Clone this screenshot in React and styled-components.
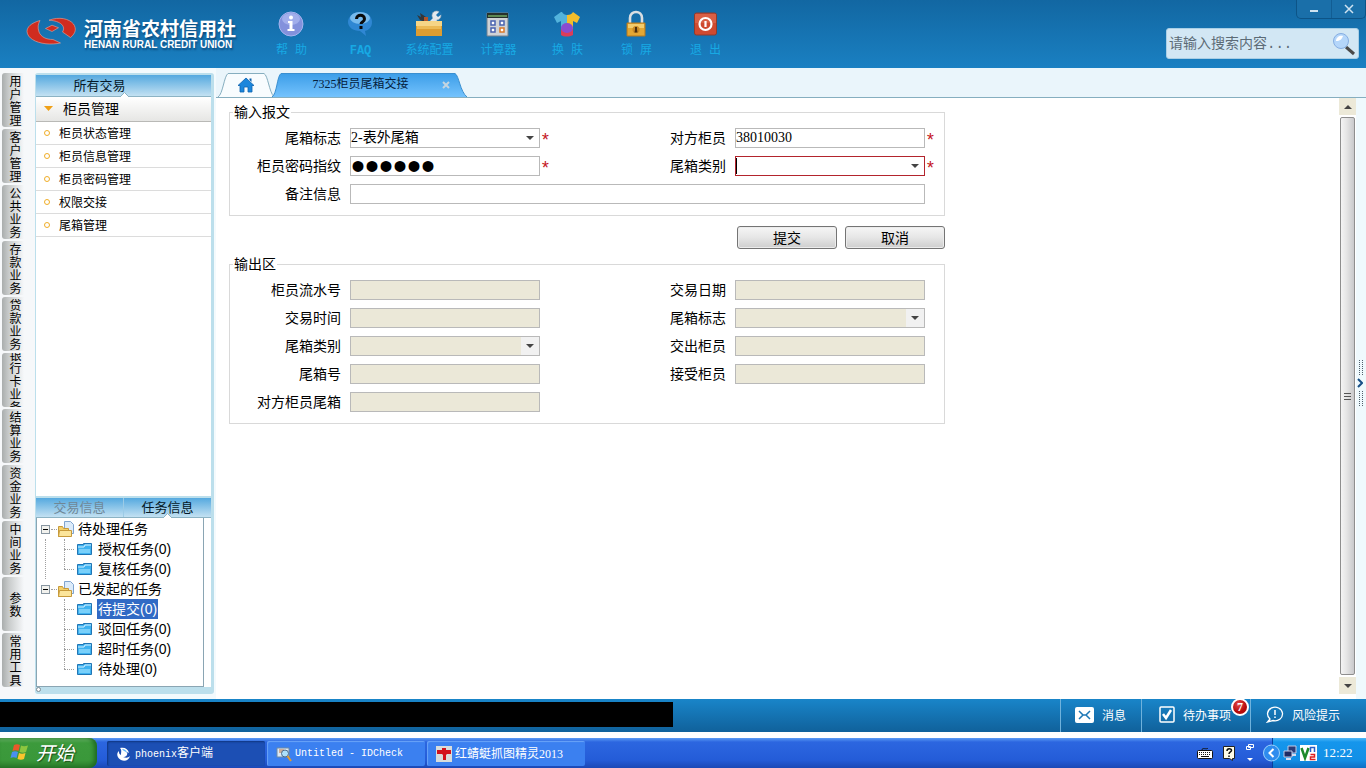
import React from "react";
import styled, { createGlobalStyle, css } from "styled-components";

const CJK = '"Noto Sans CJK SC", sans-serif';

const Global = createGlobalStyle`
  *, *::before, *::after { box-sizing: border-box; }
  body { margin: 0; background: #fff; color: #000; font: 14px/16px "Liberation Sans", ${CJK}; }
  button, input, select { font: inherit; color: inherit; margin: 0; }
  button { cursor: pointer; }
  svg { display: block; flex: none; }
  ul { list-style: none; margin: 0; padding: 0; }
`;

const Page = styled.div`
  display: flex;
  flex-direction: column;
  min-height: 100vh;
`;

/* ---------- header ---------- */
const Header = styled.header`
  display: flex;
  height: 68px;
  background: linear-gradient(#1267a2, #1a80c2);
`;
const Brand = styled.div`
  display: flex;
  align-items: flex-start;
  gap: 7px;
  width: 257px;
  padding: 17px 0 0 26px;
  color: #fff;
  text-shadow: 1px 2px 2px #0b4a7c;
`;
const BrandName = styled.div`
  font: bold 19px/22px ${CJK};
  white-space: nowrap;
`;
const BrandSub = styled.div`
  font: bold 10px/12px "Liberation Sans", sans-serif;
  white-space: nowrap;
`;
const Tools = styled.nav`
  display: flex;
  flex: 1;
`;
const ToolButton = styled.button`
  display: flex;
  flex-direction: column;
  align-items: center;
  gap: 6px;
  width: 69px;
  padding: 10px 0 0;
  border: 0;
  background: none;
  color: #17a9e4;
  font: ${(p) => (p.$bold ? "bold " : "")}12px/16px "Liberation Mono", ${CJK};
  white-space: nowrap;
`;
const HeaderEnd = styled.div`
  display: flex;
  flex-direction: column;
  align-items: flex-end;
  gap: 9px;
`;
const WindowButtons = styled.div`
  display: flex;
  height: 19px;
  border: 1px solid #0d5487;
  border-top: 0;
  border-radius: 0 0 5px 5px;
  background: #1a6fa9;
`;
const WindowButton = styled.button`
  display: flex;
  align-items: center;
  justify-content: center;
  width: 34px;
  padding: 0;
  border: 0;
  background: none;
  & + & { border-left: 1px solid #125d93; }
`;
const Search = styled.form`
  display: flex;
  align-items: center;
  width: 193px;
  height: 31px;
  margin-right: 7px;
  padding: 0 2px;
  border: 1px solid #a9cfe6;
  border-radius: 3px;
  background: #d2e7f4;
`;
const SearchInput = styled.input`
  flex: 1;
  min-width: 0;
  padding: 0;
  border: 0;
  outline: 0;
  background: none;
  font: 14px/20px "Liberation Mono", ${CJK};
  &::placeholder { color: #5c6b76; opacity: 1; }
`;
const IconButton = styled.button`
  padding: 0;
  border: 0;
  background: none;
`;

/* ---------- body ---------- */
const Body = styled.div`
  display: flex;
  flex: 1;
  background: #f3fafd;
`;
const Rail = styled.nav`
  display: flex;
  flex-direction: column;
  gap: 2px;
  width: 35px;
  padding: 5px 2px 0;
  background: #f6f8fa;
`;
const RailTab = styled.button`
  display: flex;
  align-items: center;
  height: 54px;
  padding: 0 0 0 7px;
  overflow: hidden;
  border: 0;
  border-radius: 3px 0 0 3px;
  background: linear-gradient(90deg, #a9adad, #c9cccc 7px, #f6f8fa 22px);
`;
const RailText = styled.span`
  width: 13px;
  font: 12px/13px ${CJK};
  word-break: break-all;
`;
const Side = styled.aside`
  position: relative;
  display: flex;
  flex-direction: column;
  width: 179px;
  margin: 5px 0 5px;
  border: 2px solid #bcdfec;
  border-width: 2px 3px 7px 1px;
  border-radius: 3px;
  background: #fff;
  &::after {
    content: "";
    position: absolute;
    left: 0;
    bottom: -5px;
    width: 5px;
    height: 5px;
    border: 1px solid #7d8b93;
    border-radius: 50%;
    background: #fff;
  }
`;
const SideHead = styled.div`
  display: flex;
  height: 22px;
  border-top: ${(p) => (p.$lower ? "2px solid #bcdfec" : "0")};
  border-bottom: 1px solid #8cb3c4;
  background: linear-gradient(#55a9df, #c3e1f2);
`;
const SideTab = styled.button`
  position: relative;
  flex: ${(p) => (p.$wide ? "none" : "1")};
  width: ${(p) => (p.$wide ? "127px" : "auto")};
  padding: 0 0 2px;
  border: 0;
  background: none;
  color: ${(p) => (p.$dim ? "#6f8797" : "#041827")};
  font: 13px/18px ${CJK};
  & + & { border-left: 1px solid #9ccbe6; }
`;
const Notch = styled.svg`
  position: absolute;
  bottom: -1px;
  left: calc(50% + ${(p) => p.$shift}px);
`;
const MenuTitle = styled.button`
  display: flex;
  align-items: center;
  gap: 10px;
  height: 25px;
  padding: 0 8px 2px;
  border: 0;
  border-bottom: 1px solid #b9b9b6;
  background: linear-gradient(#fff, #e6e6e4);
  font: 14px/20px ${CJK};
`;
const Menu = styled.ul`
  flex: 1;
`;
const MenuItem = styled.a`
  display: flex;
  align-items: center;
  gap: 9px;
  height: 23px;
  padding-left: 8px;
  border-bottom: 1px solid #dcdcdc;
  color: #000;
  font: 12px/16px ${CJK};
  text-decoration: none;
  &::before {
    content: "";
    width: 6px;
    height: 6px;
    border: 1px solid #f0ae28;
    border-radius: 50%;
  }
`;
const Tree = styled.ul`
  width: 168px;
  height: 169px;
  padding-top: 1px;
  border: 1px solid #8aa5b3;
  border-top: 0;
`;
const TreeRow = styled.div`
  position: relative;
  display: flex;
  align-items: center;
  gap: 3px;
  height: 20px;
  padding-left: 4px;
  &::before {
    content: "";
    position: absolute;
    left: 14px;
    top: 10px;
    width: 6px;
    border-top: 1px dotted #a0a0a0;
  }
`;
const Toggle = styled.button`
  display: flex;
  align-items: center;
  justify-content: center;
  width: 9px;
  height: 9px;
  margin-right: 5px;
  padding: 0;
  border: 1px solid #8795a0;
  background: #f2f2ee;
  &::before { content: ""; width: 5px; height: 1px; background: #000; }
`;
const Branch = styled.ul`
  margin-left: 8px;
  padding-left: 18px;
  border-left: 1px dotted ${(p) => (p.$last ? "transparent" : "#a0a0a0")};
`;
const Leaf = styled.li`
  position: relative;
  display: flex;
  align-items: center;
  gap: 5px;
  height: 20px;
  padding-left: 13px;
  &::before, &::after { content: ""; position: absolute; left: 0; top: 0; }
  &::before { height: ${(p) => (p.$last ? "10px" : "20px")}; border-left: 1px dotted #a0a0a0; }
  &::after { top: 10px; width: 10px; border-top: 1px dotted #a0a0a0; }
`;
const LeafLabel = styled.span`
  padding: 1px;
  color: ${(p) => (p.$on ? "#fff" : "#000")};
  background: ${(p) => (p.$on ? "#316ac5" : "none")};
  line-height: 18px;
  white-space: nowrap;
`;

/* ---------- main ---------- */
const Main = styled.main`
  display: flex;
  flex-direction: column;
  flex: 1;
  min-width: 0;
  margin-left: 2px;
`;
const Tabs = styled.div`
  display: flex;
  align-items: flex-end;
  height: 30px;
  padding-left: 2px;
  border-bottom: 1px solid #86aebf;
  background: #eaf5fb;
`;
const Tab = styled.button`
  position: relative;
  display: flex;
  align-items: center;
  justify-content: center;
  width: ${(p) => (p.$home ? "56px" : "195px")};
  height: 24px;
  margin-left: ${(p) => (p.$home ? "0" : "-2px")};
  padding: 0;
  border: 0;
  background: none;
  color: #04203c;
  font: 12px/16px "Liberation Serif", ${CJK};
`;
const TabShape = styled.svg`
  position: absolute;
  left: 0;
  top: 0;
`;
const TabText = styled.span`
  position: relative;
  margin-right: 18px;
  padding-bottom: 2px;
`;
const TabIcon = styled.span`
  position: relative;
`;
const TabClose = styled.span`
  position: absolute;
  right: 17px;
  top: 8px;
`;
const Work = styled.div`
  display: flex;
  flex: 1;
`;
const Content = styled.div`
  flex: 1;
  min-width: 0;
  padding: 6px 13px;
  background: #fff;
`;
const Form = styled.form`
  max-width: 716px;
`;
const Group = styled.fieldset`
  min-width: 0;
  margin: 0;
  padding: 8px 0 11px;
  border: 1px solid #d9d9d9;
`;
const Legend = styled.legend`
  margin-left: 3px;
  padding: 0 1px 2px;
  font: 14px/14px ${CJK};
`;
const Fields = styled.div`
  display: grid;
  grid-template-columns: 112px 190px 1fr 190px 11px;
  gap: 8px;
`;
const Label = styled.label`
  padding-right: 1px;
  font: 14px/18px ${CJK};
  text-align: right;
`;
const Cell = styled.div`
  position: relative;
  display: flex;
  height: 20px;
  grid-column: span ${(p) => p.$span || 1};
`;
const box = css`
  flex: none;
  width: 100%;
  height: 20px;
  padding: 0;
  border: 1px solid ${(p) => (p.$alert ? "#b3242d" : "#b9b9b9")};
  border-radius: 0;
  outline: 0;
  background: #fff;
  font: 14px/18px "Liberation Serif", ${CJK};
  &:disabled { background: #ebe8d8; opacity: 1; }
`;
const TextBox = styled.input`${box}`;
const SecretBox = styled.input`
  ${box}
  font: 40px/18px "Liberation Sans", sans-serif;
`;
const Choice = styled.select`
  ${box}
  appearance: none;
`;
const ChoiceArrow = styled.span`
  position: absolute;
  right: 1px;
  top: 1px;
  display: flex;
  align-items: center;
  justify-content: center;
  width: 18px;
  height: 18px;
  background: ${(p) => (p.$off ? "#f1f1f1" : "none")};
  pointer-events: none;
`;
const Caret = styled.span`
  position: absolute;
  left: 1px;
  top: 2px;
  width: 1px;
  height: 16px;
  background: #000;
`;
const Star = styled.span`
  padding-top: 3px;
  color: #c4161c;
  font: 18px/20px "Liberation Mono", monospace;
`;
const Actions = styled.div`
  display: flex;
  justify-content: flex-end;
  gap: 8px;
  margin: 10px 0 7px;
`;
const ActionButton = styled.button`
  width: 100px;
  height: 23px;
  padding: 0 0 2px;
  border: 1px solid #747474;
  border-radius: 3px;
  background: linear-gradient(#f6f6f6, #e6e6e6 50%, #cecece);
  box-shadow: inset 0 0 0 1px #ececec;
  font: 14px/18px ${CJK};
`;
const ScrollTrack = styled.div`
  display: flex;
  flex-direction: column;
  align-items: center;
  gap: 2px;
  width: 17px;
  padding-bottom: 5px;
  background: #fff;
`;
const ScrollEnd = styled.button`
  display: flex;
  align-items: center;
  justify-content: center;
  width: 17px;
  height: 17px;
  padding: 0;
  border: 0;
  background: #ece9d8;
`;
const ScrollThumb = styled.div`
  display: flex;
  align-items: center;
  justify-content: center;
  flex: 1;
  width: 15px;
  border: 1px solid #8e8e8e;
  border-radius: 2px;
  background: linear-gradient(90deg, #f4f4f4, #e4e4e4 45%, #c9c9cb);
`;
const Splitter = styled.div`
  display: flex;
  flex-direction: column;
  align-items: flex-end;
  justify-content: center;
  gap: 3px;
  width: 10px;
  padding-right: 3px;
  padding-bottom: 32px;
  background: #eff9fd;
`;
const Dots = styled.span`
  width: 4px;
  height: 15px;
  border: 0 dotted #50606c;
  border-width: 0 1px;
`;

/* ---------- status bar ---------- */
const Status = styled.footer`
  display: flex;
  height: 33px;
  margin-bottom: 6px;
  background: linear-gradient(#1985c9, #10619b);
`;
const StatusFill = styled.div`
  flex: 1;
  padding-top: 3px;
`;
const Redacted = styled.div`
  width: 63.5%;
  height: 25px;
  background: #000;
`;
const StatusItem = styled.button`
  position: relative;
  display: flex;
  align-items: center;
  gap: 8px;
  width: ${(p) => p.$w}px;
  padding: 0 0 2px 14px;
  border: 0;
  border-left: 1px solid #6fb2dc;
  background: none;
  color: #fff;
  font: 12px/16px ${CJK};
  white-space: nowrap;
`;
const Badge = styled.span`
  position: absolute;
  right: 1px;
  top: -1px;
  width: 18px;
  height: 18px;
  border: 2px solid #fff;
  border-radius: 50%;
  background: radial-gradient(circle at 40% 30%, #e24a4a, #b50a0a 60%);
  font: bold 12px/14px "Liberation Serif", serif;
  text-align: center;
`;

/* ---------- taskbar ---------- */
const Taskbar = styled.footer`
  display: flex;
  height: 30px;
  background: linear-gradient(#5b9bf5, #2c66e0 4px, #245cd8 22px, #1b48b5);
  color: #fff;
`;
const Start = styled.button`
  display: flex;
  align-items: center;
  gap: 6px;
  width: 97px;
  margin-right: 10px;
  padding: 0 0 2px 10px;
  border: 0;
  border-radius: 0 8px 8px 0;
  background: linear-gradient(#6cb86a, #3c9a3c 5px, #3a983a 22px, #2a7a2a);
  box-shadow: inset -3px 0 4px #1f6b22;
  color: #fff;
  font: italic 19px/24px ${CJK};
  text-shadow: 1px 1px 1px #1a4d1a;
`;
const Tasks = styled.div`
  display: flex;
  flex: 1;
  gap: 2px;
  padding: 3px 0 2px;
`;
const Task = styled.button`
  display: flex;
  align-items: center;
  gap: 3px;
  width: 158px;
  padding: 0 0 0 9px;
  border: 0;
  border-radius: 2px;
  background: ${(p) => (p.$on ? "#1c4fb4" : "#3b80f0")};
  box-shadow: ${(p) => (p.$on ? "inset 1px 1px 2px #0f3680" : "inset 1px 1px 1px #6ba3f8")};
  color: #fff;
  font: 12px/16px ${CJK};
  white-space: nowrap;
`;
const Latin = styled.span`
  font: 10px/16px "Liberation Mono", monospace;
`;
const Digits = styled.span`
  font: 12px/16px "Liberation Serif", serif;
`;
const InputTools = styled.div`
  display: flex;
  align-items: center;
  gap: 10px;
  padding-right: 17px;
`;
const Tray = styled.div`
  display: flex;
  align-items: center;
  gap: 3px;
  width: 94px;
  border-left: 1px solid #0a3f9c;
  background: linear-gradient(#4fb8f8, #1596ec 4px, #128fe6 22px, #0e6fc4);
`;
const TrayToggle = styled.button`
  margin-left: -10px;
  padding: 0;
  border: 0;
  background: none;
`;
const Clock = styled.time`
  margin-left: 3px;
  font: 13px/16px "Liberation Serif", serif;
`;

/* ---------- drawings ---------- */
const Logo = () => (
  <svg width="51" height="30" viewBox="0 0 51 30">
    <g fill="#d02c1f" stroke="#e9a79b" strokeWidth=".6">
      <path d="M14 3.500C5 6 1 10 1 14.500 1.500 21 9 25.500 20 26.800c5 .4 10 .2 14.500-.8L27 22.500c-7 0-12-2.500-14-7.500-1.500-4.500-1-8 1-11.500z" />
      <path d="M23 3.200C33-.5 43 1.500 47.500 7c3 4.500 2.500 9-3 13.500L36.500 15C40 9.500 35 4 23 3.200z" />
      <path d="M19.500 11.500L26 8.200l6.500 2.500-6.500 3.800z" />
    </g>
  </svg>
);
const toolIcons = {
  help: (
    <>
      <circle cx="13" cy="14" r="12" fill="#8391dc" stroke="#a5b4ee" />
      <ellipse cx="13" cy="9" rx="9" ry="6" fill="#b2bff2" opacity=".65" />
      <circle cx="13" cy="7.500" r="2" fill="#fff" />
      <path d="M10 11h4.500v8h2v2h-7v-2h2v-6H10z" fill="#fff" />
    </>
  ),
  faq: (
    <>
      <path d="M13 2c7 0 12 4 12 10 0 5-3 8-7 9l1 5-6-5C6 21 1 17 1 12S6 2 13 2z" fill="#2f87d3" />
      <ellipse cx="13" cy="8" rx="10" ry="6" fill="#8fcbf5" opacity=".75" />
      <path d="M9.500 9c0-5 8-5 8 0 0 3-3.500 3-3.500 5M14 16v3" fill="none" stroke="#0b0b0b" strokeWidth="3" />
    </>
  ),
  config: (
    <>
      <path d="M4 10l-3-5 4 2-1-4 6 4-1 5z" fill="#33373b" />
      <circle cx="20.500" cy="5.500" r="4.500" fill="#e4e9ed" stroke="#9aa6ae" strokeWidth=".6" />
      <path d="M20 5l4-4 2 3-4 3z" fill="#1a72b0" />
      <path d="M14 11l4-4 3 3-1 2z" fill="#dfe5ea" />
      <path d="M8 7h4v4H8z" fill="#b2552a" />
      <path d="M0 11h26v15H0z" fill="#dd9d31" />
      <path d="M0 11h26v5H0z" fill="#f6d586" />
      <path d="M1 16h24v3H1z" fill="#ecba55" />
    </>
  ),
  calc: (
    <>
      <path d="M2 3h21v23H2z" fill="#cfd2d6" stroke="#73818e" />
      <path d="M2 3h21v5H2z" fill="#26312d" />
      <path d="M3 5h19v2H3z" fill="#5e8a55" />
      <g fill="#fff" stroke="#4a63b0" strokeWidth="1.500">
        <path d="M6 11h4v4H6zM15 11h4v4h-4zM6 18h4v4H6z" />
        <path d="M15 18h4v4h-4z" stroke="#d97a2b" />
      </g>
    </>
  ),
  skin: (
    <>
      <path d="M7 2L0 7l3 6 4-2v14h6V5C11 5 9 4 8 2z" fill="#53b3dc" />
      <path d="M19 2l7 5-3 6-4-2v9H9l4-7V5c3 0 5-1 6-3z" fill="#f2bd2c" />
      <path d="M7 19h12v6c-4 2-9 2-12 0z" fill="#dc3d58" />
      <ellipse cx="13" cy="18" rx="6" ry="5" fill="#8a4bd0" />
    </>
  ),
  lock: (
    <>
      <path d="M7 14V8c0-8 12-8 12 0v6" fill="none" stroke="#d9dee2" strokeWidth="2.600" />
      <path d="M4 13h18v13H4z" fill="#e3a733" stroke="#b5791c" />
      <path d="M5 14h16v4H5z" fill="#f3cc6b" />
      <circle cx="13" cy="19.500" r="3.500" fill="#c98a25" />
      <path d="M12 17h2v2.500l.5 3h-3l.5-3z" fill="#4a2e0c" />
    </>
  ),
  exit: (
    <>
      <rect x="2.500" y="3" width="22" height="22" rx="2" fill="#cf4a30" stroke="#8f3b2c" />
      <path d="M3 4h21v9H3z" fill="#e27a5f" opacity=".45" />
      <circle cx="13.500" cy="14" r="6" fill="none" stroke="#fff" strokeWidth="2.200" />
      <path d="M13.500 11v6" stroke="#fff" strokeWidth="2.200" />
    </>
  ),
};
const Magnifier = () => (
  <svg width="24" height="24" viewBox="0 0 24 24">
    <path d="M14 15l8 7" stroke="#4a4a4a" strokeWidth="3" />
    <circle cx="9" cy="9" r="7.500" fill="#b4d6fa" stroke="#86aee2" />
    <path d="M4 9c0-4 4-6 7-5-1 3-3 5-7 5z" fill="#fff" />
  </svg>
);
const OpenFolder = () => (
  <svg width="16" height="16" viewBox="0 0 16 16">
    <path d="M6.500 .5h6l3 3v9h-9z" fill="#dcebfa" stroke="#7fa4cf" />
    <path d="M.5 5.500h4l1 2h5v8H.5z" fill="#f3cf6b" stroke="#c79a3a" />
    <path d="M1.500 9.500h12v6h-13z" fill="#fbe59b" stroke="#c79a3a" />
  </svg>
);
const Folder = () => (
  <svg width="15" height="14" viewBox="0 0 15 14">
    <path d="M.5 2.500h6v-1h8v11H.5z" fill="#3fb2f0" stroke="#2176b5" />
    <path d="M1 5h6l1-2h6" fill="none" stroke="#d5f1ff" />
    <path d="M2 7h11v4H2z" fill="#79d0fa" />
  </svg>
);
const Down = ({ color = "#444" }) => (
  <svg width="9" height="5" viewBox="0 0 9 5"><path d="M0 0h9L4.500 5z" fill={color} /></svg>
);
const SmallDown = () => (
  <svg width="8" height="4" viewBox="0 0 8 4"><path d="M0 0h8L4 4z" fill="#444" /></svg>
);
const WindowsFlag = () => (
  <svg width="20" height="20" viewBox="0 0 20 20">
    <path d="M4 3c2-1 4-1 6 0L8.500 9c-2-1-4-1-6 0z" fill="#e8582a" />
    <path d="M11 3.500c2 1 4 1 7 0L16 10c-2 1-4 1-6.500 0z" fill="#8cc63f" />
    <path d="M2 10c2-1 4-1 6 0l-1.500 6c-2-1-4-1-6 0z" fill="#4a8ff0" />
    <path d="M9 11c2 1 4 1 6.500 0L14 17c-2 1-4 1-6.500 0z" fill="#fbc52d" />
  </svg>
);
const NotchMark = ({ shift = 0 }) => (
  <Notch $shift={shift - 5} width="9" height="5" viewBox="0 0 9 5">
    <path d="M0 5L4.500 .5 9 5" fill="#fff" stroke="#8cb3c4" />
  </Notch>
);

/* ---------- data ---------- */
const tools = [
  ["help", "帮 助"], ["faq", "FAQ"], ["config", "系统配置"], ["calc", "计算器"],
  ["skin", "换 肤"], ["lock", "锁 屏"], ["exit", "退 出"],
];
const rail = ["用户管理", "客户管理", "公共业务", "存款业务", "贷款业务", "银行卡业务", "结算业务", "资金业务", "中间业务", "参数", "常用工具"];
const menu = ["柜员状态管理", "柜员信息管理", "柜员密码管理", "权限交接", "尾箱管理"];
const tree = [
  { name: "待处理任务", items: ["授权任务(0)", "复核任务(0)"] },
  { name: "已发起的任务", items: ["待提交(0)", "驳回任务(0)", "超时任务(0)", "待处理(0)"] },
];
const outputs = [
  ["serial", "柜员流水号"], ["date", "交易日期"],
  ["time", "交易时间"], ["outFlag", "尾箱标志", true],
  ["outType", "尾箱类别", true], ["from", "交出柜员"],
  ["boxNo", "尾箱号"], ["to", "接受柜员"],
  ["peerBox", "对方柜员尾箱"],
];

function SelectField({ id, options = [""], disabled, alert, required, caret }) {
  return (
    <Cell>
      <Choice id={id} disabled={disabled} $alert={alert}>
        {options.map((o) => <option key={o}>{o}</option>)}
      </Choice>
      {caret && <Caret />}
      <ChoiceArrow $off={disabled}><SmallDown /></ChoiceArrow>
      {required && <Star>*</Star>}
    </Cell>
  );
}

function Sidebar() {
  return (
    <Side>
      <SideHead><SideTab $wide>所有交易<NotchMark shift={25} /></SideTab></SideHead>
      <MenuTitle><Down color="#f0a016" />柜员管理</MenuTitle>
      <Menu>
        {menu.map((m) => <li key={m}><MenuItem href="#">{m}</MenuItem></li>)}
      </Menu>
      <SideHead $lower>
        <SideTab $dim>交易信息</SideTab>
        <SideTab>任务信息<NotchMark /></SideTab>
      </SideHead>
      <Tree>
        {tree.map((g, gi) => (
          <li key={g.name}>
            <TreeRow><Toggle aria-label="折叠" /><OpenFolder /><LeafLabel>{g.name}</LeafLabel></TreeRow>
            <Branch $last={gi === tree.length - 1}>
              {g.items.map((t, i) => (
                <Leaf key={t} $last={i === g.items.length - 1}>
                  <Folder /><LeafLabel $on={t === "待提交(0)"}>{t}</LeafLabel>
                </Leaf>
              ))}
            </Branch>
          </li>
        ))}
      </Tree>
    </Side>
  );
}

function Workspace() {
  return (
    <Form>
      <Group>
        <Legend>输入报文</Legend>
        <Fields>
          <Label htmlFor="flag">尾箱标志</Label>
          <SelectField id="flag" options={["2-表外尾箱"]} required />
          <Label htmlFor="peer">对方柜员</Label>
          <Cell><TextBox id="peer" defaultValue="38010030" /><Star>*</Star></Cell>
          <span />
          <Label htmlFor="secret">柜员密码指纹</Label>
          <Cell><SecretBox id="secret" type="password" defaultValue="000000" /><Star>*</Star></Cell>
          <Label htmlFor="type">尾箱类别</Label>
          <SelectField id="type" alert caret required />
          <span />
          <Label htmlFor="memo">备注信息</Label>
          <Cell $span={3}><TextBox id="memo" /></Cell>
        </Fields>
      </Group>
      <Actions>
        <ActionButton type="button">提交</ActionButton>
        <ActionButton type="button">取消</ActionButton>
      </Actions>
      <Group>
        <Legend>输出区</Legend>
        <Fields>
          {outputs.map(([id, name, list], i) => (
            <React.Fragment key={id}>
              <Label htmlFor={id}>{name}</Label>
              {list ? <SelectField id={id} disabled /> : <Cell><TextBox id={id} disabled /></Cell>}
              {i % 2 === 1 && <span />}
            </React.Fragment>
          ))}
        </Fields>
      </Group>
    </Form>
  );
}

export default function App() {
  return (
    <Page>
      <Global />
      <Header>
        <Brand>
          <Logo />
          <div>
            <BrandName>河南省农村信用社</BrandName>
            <BrandSub>HENAN RURAL CREDIT UNION</BrandSub>
          </div>
        </Brand>
        <Tools>
          {tools.map(([k, name]) => (
            <ToolButton key={k} $bold={k === "faq"}>
              <svg width="27" height="27" viewBox="0 0 27 27">{toolIcons[k]}</svg>
              {name}
            </ToolButton>
          ))}
        </Tools>
        <HeaderEnd>
          <WindowButtons>
            <WindowButton aria-label="最小化">
              <svg width="10" height="10" viewBox="0 0 10 10"><path d="M1 7h8" stroke="#cfe3f1" strokeWidth="2" /></svg>
            </WindowButton>
            <WindowButton aria-label="关闭">
              <svg width="10" height="10" viewBox="0 0 10 10"><path d="M1 1l8 8M9 1L1 9" stroke="#cfe3f1" strokeWidth="1.500" /></svg>
            </WindowButton>
          </WindowButtons>
          <Search>
            <SearchInput aria-label="搜索" placeholder="请输入搜索内容..." />
            <IconButton type="button" aria-label="查找"><Magnifier /></IconButton>
          </Search>
        </HeaderEnd>
      </Header>

      <Body>
        <Rail>
          {rail.map((r) => <RailTab key={r}><RailText>{r}</RailText></RailTab>)}
        </Rail>
        <Sidebar />
        <Main>
          <Tabs>
            <Tab $home aria-label="首页">
              <TabShape width="56" height="24" viewBox="0 0 56 24">
                <path d="M0 24C5 21 6 3 10 .5h36c4 2 5 18 10 23.500" fill="#f8fcfe" stroke="#86aebf" />
              </TabShape>
              <TabIcon>
                <svg width="18" height="16" viewBox="0 0 18 16">
                  <path d="M9 1l8 7.500h-2V15h-4v-5H7v5H3V8.500H1z" fill="#1b86dc" stroke="#0e62ae" strokeWidth=".8" />
                  <path d="M12.500 1.500h2V5l-2-2z" fill="#0e62ae" />
                </svg>
              </TabIcon>
            </Tab>
            <Tab>
              <TabShape width="195" height="24" viewBox="0 0 195 24">
                <defs>
                  <linearGradient id="tabFill" x2="0" y2="1">
                    <stop offset="0" stopColor="#3c9ee8" /><stop offset="1" stopColor="#74c2fd" />
                  </linearGradient>
                </defs>
                <path d="M0 24C5 21 5 3 9 .5h174c4 2 5 18 12 23.500" fill="url(#tabFill)" stroke="#3a8fd0" />
              </TabShape>
              <TabText>7325柜员尾箱交接</TabText>
              <TabClose>
                <svg width="8" height="8" viewBox="0 0 8 8"><path d="M1 1l6 6M7 1L1 7" stroke="#c5d5e0" strokeWidth="2" /></svg>
              </TabClose>
            </Tab>
          </Tabs>
          <Work>
            <Content><Workspace /></Content>
            <ScrollTrack>
              <ScrollEnd aria-label="向上"><svg width="8" height="4" viewBox="0 0 8 4"><path d="M0 4h8L4 0z" fill="#444" /></svg></ScrollEnd>
              <ScrollThumb><svg width="7" height="9" viewBox="0 0 7 9"><path d="M0 1.500h7M0 4.500h7M0 7.500h7" stroke="#555" /></svg></ScrollThumb>
              <ScrollEnd aria-label="向下"><SmallDown /></ScrollEnd>
            </ScrollTrack>
            <Splitter>
              <Dots />
              <svg width="6" height="10" viewBox="0 0 6 10"><path d="M1 1l4 4-4 4" fill="none" stroke="#174f86" strokeWidth="2" /></svg>
              <Dots />
            </Splitter>
          </Work>
        </Main>
      </Body>

      <Status>
        <StatusFill><Redacted /></StatusFill>
        <StatusItem $w={81}>
          <svg width="19" height="16" viewBox="0 0 19 16">
            <rect width="19" height="16" rx="2" fill="#fff" />
            <path d="M4 4l4 4-4 4M15 4l-4 4 4 4M8 8h3" fill="none" stroke="#1b76b5" strokeWidth="1.500" />
          </svg>
          消息
        </StatusItem>
        <StatusItem $w={109}>
          <svg width="19" height="17" viewBox="0 0 19 17">
            <rect x="4" y="1" width="14" height="15" rx="1" fill="none" stroke="#fff" strokeWidth="1.500" />
            <path d="M7 8l3 4 5-8" fill="none" stroke="#fff" strokeWidth="2.500" />
          </svg>
          待办事项
          <Badge>7</Badge>
        </StatusItem>
        <StatusItem $w={116}>
          <svg width="19" height="17" viewBox="0 0 19 17">
            <path d="M5 13l-2.500 3 5.500-1.500a7.500 6.800 0 1 0-3-1.500z" fill="none" stroke="#fff" strokeWidth="1.300" />
            <path d="M10 4v5M10 10.500v1.500" stroke="#fff" strokeWidth="1.500" />
          </svg>
          风险提示
        </StatusItem>
      </Status>

      <Taskbar>
        <Start><WindowsFlag />开始</Start>
        <Tasks>
          <Task $on>
            <svg width="16" height="16" viewBox="0 0 16 16">
              <path d="M4 2c5-1 8 1 9 5l-2-1c1 3-1 5-4 5 3 1 5 1 7-1-1 4-5 6-9 4-4-2-5-7-2-9 0 2 0 3 2 4 0-3 1-5-1-7z" fill="#fff" />
              <path d="M6 3c3 0 5 2 5 4-2-2-4-2-5-4z" fill="#67b7f5" />
            </svg>
            <span><Latin>phoenix</Latin>客户端</span>
          </Task>
          <Task>
            <svg width="16" height="16" viewBox="0 0 16 16">
              <path d="M1 2h12v9H1z" fill="#dce9f5" stroke="#6e8aa6" />
              <path d="M3 4h5M3 6h3" stroke="#c26e35" />
              <circle cx="9" cy="7.500" r="3.500" fill="#aee0fa" stroke="#4c6c8c" />
              <path d="M11.500 10l3.500 5" stroke="#e39a30" strokeWidth="2" />
            </svg>
            <Latin>Untitled - IDCheck</Latin>
          </Task>
          <Task>
            <svg width="16" height="16" viewBox="0 0 16 16">
              <rect width="16" height="16" fill="#d8dcdc" />
              <path d="M6 2h4v2h5v4h-4l-1 1v5H7V9L6 8H1V4h5z" fill="#d3121c" />
            </svg>
            <span>红蜻蜓抓图精灵<Digits>2013</Digits></span>
          </Task>
        </Tasks>
        <InputTools>
          <svg width="16" height="12" viewBox="0 0 16 12">
            <path d="M5 3c0-3 5 0 6-2" fill="none" stroke="#111" />
            <rect x=".5" y="3.500" width="15" height="8" rx="1" fill="#fff" stroke="#111" />
            <path d="M2 5.500h12M2 7.500h12" stroke="#111" strokeDasharray="1 1" />
            <path d="M4 9.500h8" stroke="#111" />
          </svg>
          <svg width="12" height="15" viewBox="0 0 12 15">
            <path d="M.5 .5h11v12h-2v2l-3-2h-6z" fill="#fffde8" stroke="#222" />
            <path d="M4 5c0-3 4.500-3 4.500-.5C8.500 6 6 6 6 8M6 9.500v1.500" fill="none" stroke="#111" strokeWidth="1.500" />
          </svg>
          <svg width="10" height="20" viewBox="0 0 10 20">
            <path d="M3.500 1.500h5v3h-5zM1.500 3.500h4v3h-4z" fill="#2c62d8" stroke="#fff" />
            <path d="M2 15h6l-3 3z" fill="#fff" />
          </svg>
        </InputTools>
        <Tray>
          <TrayToggle aria-label="显示隐藏图标">
            <svg width="17" height="18" viewBox="0 0 17 18">
              <circle cx="8.500" cy="9" r="8" fill="#2e8cee" stroke="#9fd3fb" />
              <path d="M10.500 5l-4 4 4 4" fill="none" stroke="#fff" strokeWidth="2" />
            </svg>
          </TrayToggle>
          <svg width="14" height="16" viewBox="0 0 14 16">
            <path d="M5 1h8v7H5z" fill="#2b3c78" stroke="#c2cbe6" />
            <path d="M1 6h8v6H1z" fill="#1f2b63" stroke="#c2cbe6" />
            <path d="M3 14h5M9 10h4" stroke="#d7dcf0" strokeWidth="2" />
          </svg>
          <svg width="17" height="16" viewBox="0 0 17 16">
            <rect width="17" height="16" fill="#fff" />
            <path d="M1.500 3L5 13 8.500 3" fill="none" stroke="#1d8a2b" strokeWidth="2.500" />
            <path d="M10.500 7V2.500h4V7" fill="none" stroke="#2a5fc8" strokeWidth="1.500" />
            <path d="M10.500 9.500h4V12h-4v2.500h5" fill="none" stroke="#d22" strokeWidth="1.500" />
          </svg>
          <Clock>12:22</Clock>
        </Tray>
      </Taskbar>
    </Page>
  );
}
